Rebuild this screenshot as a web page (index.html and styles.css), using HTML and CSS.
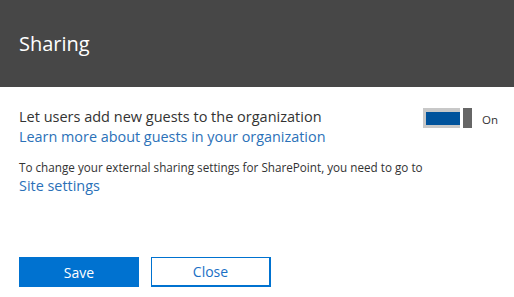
FILE: index.html
```html
<!DOCTYPE html>
<html>
<head>
<meta charset="utf-8">
<link rel="stylesheet" href="styles.css">
</head>
<body>
<div class="header"><h1 class="title">Sharing</h1></div>
<div class="content">
  <div class="setting-row">
    <div class="setting-text">
      <div class="label">Let users add new guests to the organization</div>
      <a class="link" href="#">Learn more about guests in your organization</a>
    </div>
    <div class="toggle">
      <div class="track"><div class="fill"></div></div>
      <div class="thumb"></div>
      <span class="toggle-label">On</span>
    </div>
  </div>
  <p class="note">To change your external sharing settings for SharePoint, you need to go to</p>
  <a class="link" href="#">Site settings</a>
  <div class="actions">
    <button class="btn btn-primary">Save</button>
    <button class="btn btn-secondary">Close</button>
  </div>
</div>
</body>
</html>
```
FILE: styles.css
```css
html, body {
  margin: 0;
  padding: 0;
  background: #ffffff;
  font-family: "Open Sans", "Noto Sans", sans-serif;
  color: #333333;
}
.header {
  height: 87px;
  background: #474747;
  display: flex;
  align-items: center;
  padding-left: 19px;
}
.title {
  margin: 0;
  font-weight: 400;
  font-size: 20px;
  color: #ffffff;
  line-height: 26px;
}
.content {
  padding: 20px 16px 0 19px;
}
.setting-row {
  display: flex;
  justify-content: space-between;
  align-items: flex-start;
}
.setting-text {
  display: flex;
  flex-direction: column;
}
.label {
  font-size: 14.5px;
  line-height: 20px;
  color: #333333;
}
.link {
  display: block;
  font-size: 14.4px;
  line-height: 20px;
  color: #2b71b8;
  text-decoration: none;
}
.toggle {
  display: flex;
  align-items: center;
  margin-top: 0.5px;
}
.track {
  width: 34px;
  height: 14px;
  background: #c8c8c8;
  padding: 3px 0 3px 3px;
  display: flex;
}
.fill {
  flex: 1;
  background: #00539c;
  margin-top: 1px;
}
.thumb {
  width: 9px;
  height: 20px;
  background: #666666;
  margin-left: 3px;
}
.toggle-label {
  margin-left: 10px;
  font-size: 11.5px;
  color: #333333;
  padding-top: 3px;
}
.note {
  margin: 12px 0 0 0;
  font-size: 11.7px;
  line-height: 17px;
  color: #333333;
}
.actions {
  display: flex;
  gap: 12px;
  margin-top: 61px;
}
.btn {
  width: 120px;
  height: 30px;
  font-family: "Open Sans", "Noto Sans", sans-serif;
  font-size: 14px;
  padding: 0;
  cursor: pointer;
}
.btn-primary {
  background: #0072d0;
  color: #ffffff;
  border: none;
}
.btn-secondary {
  background: #ffffff;
  color: #1a6fc5;
  border: 1px solid #0072d0;
  border-width: 1px 2px 2px 1px;
}
```
